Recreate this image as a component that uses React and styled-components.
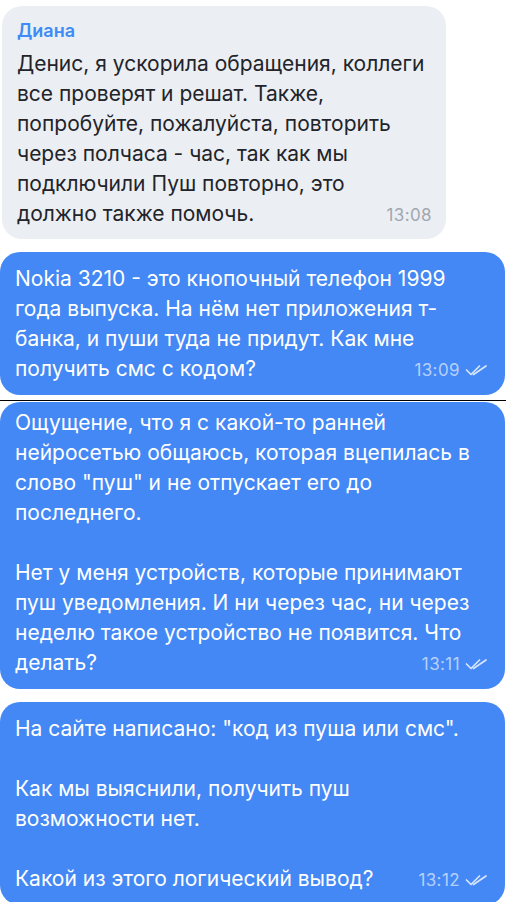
import React from 'react'
import styled, { createGlobalStyle } from 'styled-components'

const GlobalStyle = createGlobalStyle`
    html, body {
        margin: 0;
        padding: 0;
        background: #ffffff;
    }

    body {
        font-family: Inter, "Noto Sans", sans-serif;
        -webkit-font-smoothing: antialiased;
    }
`;

const CHAT = styled.main`
    display: flex;
    flex-direction: column;
    width: 506px;
    height: 902px;
    padding-top: 6px;
    box-sizing: border-box;
    overflow: hidden;
`;

const BUBBLE = styled.div`
    box-sizing: border-box;
    flex-shrink: 0;
    width: ${props => props.$incoming ? '444px' : '505px'};
    margin: ${props => props.$incoming ? '0 0 13px 2px' : '0 1px 0 0'};
    padding: ${props => props.$incoming ? '14px 14px 9px 15px' : `${props.$top}px 18px 10px 15px`};
    border-radius: 20px;
    background: ${props => props.$incoming ? '#ebeef3' : '#4388f5'};
    color: ${props => props.$incoming ? '#222429' : '#ffffff'};
    font-size: 21px;
    line-height: 30px;
`;

const GAP = styled.div`
    flex-shrink: 0;
    height: ${props => props.$size}px;
`;

const CUT = styled.hr`
    flex-shrink: 0;
    width: 100%;
    height: 1px;
    margin: 5px 0 1px;
    border: 0;
    background: #000000;
`;

const AUTHOR = styled.div`
    margin-bottom: 7px;
    font-size: 18px;
    line-height: 22px;
    font-weight: 600;
    color: #3d8bf6;
`;

const LINE = styled.div`
    min-height: 30px;
    white-space: pre;
`;

const LAST_ROW = styled(LINE)`
    display: flex;
    align-items: baseline;
    justify-content: space-between;
    gap: 12px;
`;

const META = styled.span`
    display: inline-flex;
    align-items: center;
    gap: 5px;
    font-size: 17px;
    letter-spacing: 0.4px;
    line-height: 30px;
    color: ${props => props.$incoming ? '#a2a7af' : 'rgba(255, 255, 255, 0.62)'};
`;

const Checks = () => (
    <svg width="22" height="12" viewBox="0 0 22 12" fill="none">
        <path d="M1.5 6 L6 10.5 L14.5 2" stroke="rgba(255,255,255,0.78)" strokeWidth="1.7" strokeLinecap="round" strokeLinejoin="round" />
        <path d="M8.5 10.5 L21 2" stroke="rgba(255,255,255,0.78)" strokeWidth="1.7" strokeLinecap="round" />
    </svg>
);

const messages = [
    {
        id: 1,
        incoming: true,
        author: 'Диана',
        time: '13:08',
        text: 'Денис, я ускорила обращения, коллеги\nвсе проверят и решат. Также,\nпопробуйте, пожалуйста, повторить\nчерез полчаса - час, так как мы\nподключили Пуш повторно, это\nдолжно также помочь.',
    },
    {
        id: 2,
        time: '13:09',
        top: 12,
        text: 'Nokia 3210 - это кнопочный телефон 1999\nгода выпуска. На нём нет приложения т-\nбанка, и пуши туда не придут. Как мне\nполучить смс с кодом?',
        cut: true,
    },
    {
        id: 3,
        time: '13:11',
        top: 6,
        text: 'Ощущение, что я с какой-то ранней\nнейросетью общаюсь, которая вцепилась в\nслово "пуш" и не отпускает его до\nпоследнего.\n\nНет у меня устройств, которые принимают\nпуш уведомления. И ни через час, ни через\nнеделю такое устройство не появится. Что\nделать?',
        gap: 13,
    },
    {
        id: 4,
        time: '13:12',
        top: 12,
        text: 'На сайте написано: "код из пуша или смс".\n\nКак мы выяснили, получить пуш\nвозможности нет.\n\nКакой из этого логический вывод?',
    },
];

const Message = ({ item }) => {
    const lines = item.text.split('\n')
    const last = lines.pop()

    return (
        <BUBBLE $incoming={item.incoming} $top={item.top}>
            {item.author && <AUTHOR>{item.author}</AUTHOR>}
            {lines.map((line, i) => <LINE key={i}>{line}</LINE>)}
            <LAST_ROW>
                <span>{last}</span>
                <META $incoming={item.incoming}>
                    {item.time}
                    {!item.incoming && <Checks />}
                </META>
            </LAST_ROW>
        </BUBBLE>
    )
}

export default function App() {
    return (
        <>
            <GlobalStyle />
            <CHAT>
                {messages.map(item =>
                    <React.Fragment key={item.id}>
                        <Message item={item} />
                        {item.cut && <CUT />}
                        {item.gap && <GAP $size={item.gap} />}
                    </React.Fragment>
                )}
            </CHAT>
        </>
    )
}
